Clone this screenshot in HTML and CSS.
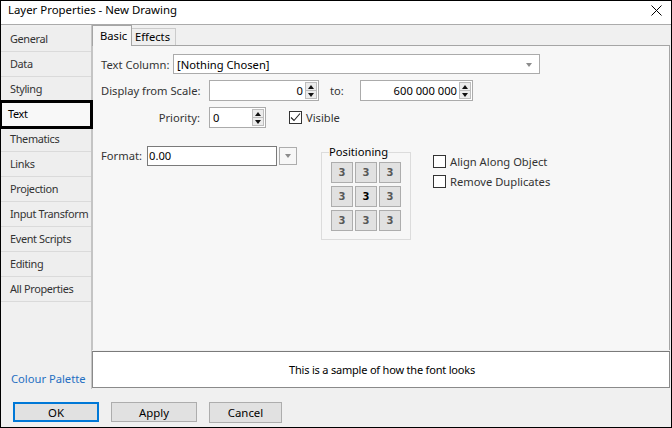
FILE: index.html
```html
<!DOCTYPE html>
<html>
<head>
<meta charset="utf-8">
<link rel="stylesheet" href="styles.css">
</head>
<body>
<div class="window">
  <div class="titlebar">
    <span class="title">Layer Properties - New Drawing</span>
    <svg class="close" width="11" height="11" viewBox="0 0 11 11"><path d="M0.5 0.5 L10.5 10.5 M10.5 0.5 L0.5 10.5" stroke="#000" stroke-width="1"/></svg>
  </div>
  <div class="main">
    <nav class="sidebar">
      <ul class="nav">
        <li class="nav-item">General</li>
        <li class="nav-item">Data</li>
        <li class="nav-item">Styling</li>
        <li class="nav-item selected">Text</li>
        <li class="nav-item">Thematics</li>
        <li class="nav-item">Links</li>
        <li class="nav-item">Projection</li>
        <li class="nav-item">Input Transform</li>
        <li class="nav-item">Event Scripts</li>
        <li class="nav-item">Editing</li>
        <li class="nav-item">All Properties</li>
      </ul>
      <a class="palette">Colour Palette</a>
    </nav>
    <div class="content">
      <div class="tabs">
        <div class="tab active">Basic</div>
        <div class="tab">Effects</div>
      </div>
      <div class="page">
        <div class="row row-column">
          <label class="lbl lbl-column">Text Column:</label>
          <div class="combo"><span>[Nothing Chosen]</span><span class="combo-arrow"></span></div>
        </div>
        <div class="row row-scale">
          <label class="lbl lbl-wide">Display from Scale:</label>
          <div class="spin spin-from"><span class="spin-val right">0</span><span class="spin-btns"><span class="up"></span><span class="down"></span></span></div>
          <label class="lbl lbl-to">to:</label>
          <div class="spin spin-to"><span class="spin-val right">600 000 000</span><span class="spin-btns"><span class="up"></span><span class="down"></span></span></div>
        </div>
        <div class="row row-priority">
          <label class="lbl lbl-wide lbl-right">Priority:</label>
          <div class="spin spin-pri"><span class="spin-val">0</span><span class="spin-btns"><span class="up"></span><span class="down"></span></span></div>
          <span class="check checked"><svg width="11" height="11" viewBox="0 0 11 11"><path d="M1 5.5 L4 8.5 L10 1.5" fill="none" stroke="#222" stroke-width="1.1"/></svg></span>
          <span class="check-lbl">Visible</span>
        </div>
        <div class="row row-lower">
          <div class="format">
            <label class="lbl lbl-format">Format:</label>
            <div class="format-input">0.00</div>
            <div class="drop-btn"><span class="combo-arrow"></span></div>
          </div>
          <fieldset class="positioning">
            <legend>Positioning</legend>
            <div class="pos-grid">
              <button class="pos">3</button><button class="pos">3</button><button class="pos">3</button>
              <button class="pos">3</button><button class="pos center">3</button><button class="pos">3</button>
              <button class="pos">3</button><button class="pos">3</button><button class="pos">3</button>
            </div>
          </fieldset>
          <div class="options">
            <div class="opt"><span class="check"></span><span class="check-lbl">Align Along Object</span></div>
            <div class="opt"><span class="check"></span><span class="check-lbl">Remove Duplicates</span></div>
          </div>
        </div>
      </div>
      <div class="sample">This is a sample of how the font looks</div>
    </div>
  </div>
  <div class="footer">
    <button class="btn btn-ok">OK</button>
    <button class="btn btn-apply">Apply</button>
    <button class="btn btn-cancel">Cancel</button>
  </div>
</div>
</body>
</html>
```
FILE: styles.css
```css
* { box-sizing: border-box; }
html, body { margin: 0; padding: 0; }
body {
  font-family: "Noto Sans", "Open Sans", sans-serif;
  font-size: 11.2px;
  color: #000;
  background: #fff;
}
.window {
  width: 672px;
  height: 428px;
  border: 1px solid #000;
  display: flex;
  flex-direction: column;
  background: #f0f0f0;
  overflow: hidden;
  white-space: nowrap;
}
.titlebar {
  height: 24px;
  flex: none;
  background: #fff;
  border-bottom: 1px solid #ababab;
  display: flex;
  align-items: center;
  padding-left: 7px;
  padding-right: 9px;
}
.title { flex: 1; line-height: 16px; margin-top: -5px; font-size: 11.4px; }
.close { margin-top: -5px; }

.main {
  height: 364px;
  flex: none;
  display: flex;
}
.sidebar {
  width: 91px;
  flex: none;
  border-right: 1px solid #c4c4c4;
  display: flex;
  flex-direction: column;
  padding-top: 2px;
}
.nav { list-style: none; margin: 0; padding: 0; }
.nav-item {
  height: 25px;
  line-height: 24px;
  padding-left: 9px;
  color: #333;
  background: #eeeeee;
  border-bottom: 1px solid #dadada;
  font-size: 10.9px;
  letter-spacing: -0.35px;
}
.nav-item.selected {
  position: relative;
  z-index: 2;
  background: #f8f8f8;
  color: #000;
  padding-left: 7px;
  outline: 3px solid #000;
  outline-offset: -1px;
}
.palette {
  margin-top: auto;
  padding-left: 10px;
  padding-bottom: 2px;
  line-height: 16px;
  color: #1f6fc2;
}

.content {
  width: 579px;
  flex: none;
  display: flex;
  flex-direction: column;
}
.tabs {
  height: 20px;
  flex: none;
  display: flex;
  align-items: flex-start;
}
.tab {
  height: 17px;
  margin-top: 3px;
  padding: 0 3px;
  width: 45px;
  line-height: 15px;
  border: 1px solid #cbcbcb;
  border-bottom: none;
  background: #efefef;
  margin-left: -1px;
}
.tab.active {
  height: 21px;
  margin-top: 0;
  margin-left: 0;
  width: 40px;
  padding-left: 7px;
  line-height: 19px;
  border-color: #a5a5a5;
  background: #f7f7f7;
  position: relative;
  z-index: 1;
}
.page {
  flex: 1;
  width: 578px;
  background: #f7f7f7;
  border-top: 1px solid #a5a5a5;
  border-left: 1px solid #c4c4c4;
  border-right: 1px solid #a5a5a5;
  padding: 8px 0 0 8px;
}
.row { display: flex; align-items: center; }
.lbl { color: #333; white-space: nowrap; }
.lbl-column { width: 72px; }
.lbl-wide { width: 108px; }
.lbl-right { text-align: right; padding-right: 9px; }
.lbl-to { margin-left: 11px; width: 30px; }
.row-column { height: 20px; }
.row-scale { height: 21px; margin-top: 6px; }
.row-priority { height: 21px; margin-top: 6px; }

.combo {
  width: 367px;
  height: 20px;
  background: #fff;
  border: 1px solid #ababab;
  display: flex;
  align-items: center;
  padding-left: 3px;
  justify-content: space-between;
  padding-right: 7px;
}
.combo-arrow {
  width: 0; height: 0;
  border-left: 3.5px solid transparent;
  border-right: 3.5px solid transparent;
  border-top: 4px solid #8c8c8c;
  margin-top: 1px;
}
.spin {
  height: 21px;
  background: #fff;
  border: 1px solid #ababab;
  display: flex;
  align-items: center;
  padding-left: 3px;
}
.spin-from { width: 110px; }
.spin-to { width: 113px; }
.spin-pri { width: 57px; }
.spin-val { flex: 1; }
.spin-val.right { text-align: right; padding-right: 2px; }
.spin-btns {
  width: 12px;
  height: 17px;
  margin-right: 1px;
  display: flex;
  flex-direction: column;
  border: 1px solid #bdbdbd;
  background: #ececec;
}
.spin-btns span {
  flex: 1;
  display: flex;
  align-items: center;
  justify-content: center;
}
.spin-btns .up { border-bottom: 1px solid #bdbdbd; }
.spin-btns .up::after {
  content: "";
  border-left: 3px solid transparent;
  border-right: 3px solid transparent;
  border-bottom: 4px solid #111;
}
.spin-btns .down::after {
  content: "";
  border-left: 3px solid transparent;
  border-right: 3px solid transparent;
  border-top: 4px solid #111;
}
.check {
  width: 13px;
  height: 13px;
  border: 1px solid #333;
  background: #fff;
  display: inline-flex;
  align-items: center;
  justify-content: center;
  flex: none;
}
.row-priority .check { margin-left: 23px; }
.check-lbl { margin-left: 4px; color: #333; white-space: nowrap; }

.row-lower { align-items: flex-start; margin-top: 18px; }
.format { display: flex; align-items: center; height: 19px; }
.lbl-format { width: 46px; }
.format-input {
  width: 130px;
  height: 20px;
  background: #fff;
  border: 1px solid #7a7a7a;
  line-height: 18px;
  padding-left: 1px;
}
.drop-btn {
  width: 18px;
  height: 18px;
  margin-left: 2px;
  border: 1px solid #adadad;
  background: #f7f7f7;
  display: flex;
  align-items: center;
  justify-content: center;
}
.positioning {
  margin: -1px 0 0 24px;
  width: 90px;
  border: 1px solid #dcdcdc;
  padding: 3px 8px 8px 9px;
}
.positioning legend {
  padding: 0;
  margin-left: -2px;
  line-height: 14px;
  color: #000;
}
.pos-grid {
  display: grid;
  grid-template-columns: repeat(3, 22px);
  grid-auto-rows: 21px;
  gap: 3px 2px;
}
.pos {
  margin: 0;
  padding: 0;
  border: 1px solid #adadad;
  background: #e1e1e1;
  font-family: "DejaVu Sans", sans-serif;
  font-weight: bold;
  font-size: 10px;
  color: #585858;
}
.pos.center { color: #000; }
.options { margin: 9px 0 0 22px; }
.opt { display: flex; align-items: center; height: 13px; margin-bottom: 7px; }

.sample {
  flex: none;
  width: 578px;
  height: 37px;
  margin-top: 1px;
  margin-bottom: 1px;
  background: #fff;
  border: 1px solid #8a8a8a;
  border-top-color: #7a7a7a;
  display: flex;
  align-items: center;
  justify-content: center;
  padding-left: 2px;
  font-size: 11px;
  letter-spacing: -0.2px;
}

.footer {
  height: 38px;
  flex: none;
  padding: 13px 0 0 12px;
  display: flex;
  align-items: flex-start;
  gap: 12px;
}
.btn {
  margin: 0;
  height: 20px;
  background: #e1e1e1;
  border: 1px solid #adadad;
  font-family: inherit;
  font-size: 11.4px;
  color: #000;
  padding: 0;
}
.btn-ok { width: 86px; border: 2px solid #0078d7; }
.btn-apply { width: 86px; }
.btn-cancel { width: 73px; height: 21px; }
```
